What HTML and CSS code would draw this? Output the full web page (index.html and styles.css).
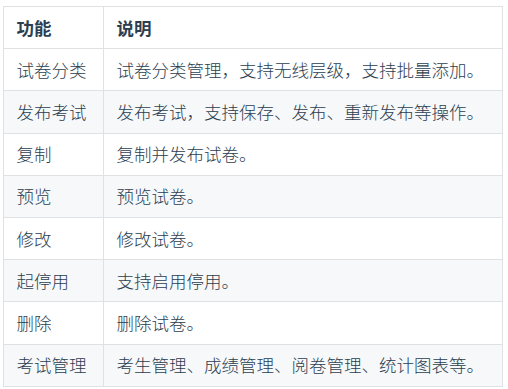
FILE: index.html
```html
<!DOCTYPE html>
<html lang="zh-CN">
<head>
<meta charset="utf-8">
<link rel="stylesheet" href="styles.css">
</head>
<body>
<table class="tbl">
  <thead>
    <tr><th class="c1">功能</th><th>说明</th></tr>
  </thead>
  <tbody>
    <tr><td>试卷分类</td><td>试卷分类管理，支持无线层级，支持批量添加。</td></tr>
    <tr><td>发布考试</td><td>发布考试，支持保存、发布、重新发布等操作。</td></tr>
    <tr><td>复制</td><td>复制并发布试卷。</td></tr>
    <tr><td>预览</td><td>预览试卷。</td></tr>
    <tr><td>修改</td><td>修改试卷。</td></tr>
    <tr><td>起停用</td><td>支持启用停用。</td></tr>
    <tr><td>删除</td><td>删除试卷。</td></tr>
    <tr><td>考试管理</td><td>考生管理、成绩管理、阅卷管理、统计图表等。</td></tr>
  </tbody>
</table>
</body>
</html>
```
FILE: styles.css
```css
html, body {
  margin: 0;
  padding: 0;
  background: #fff;
}
body {
  padding: 6px 0 0 3px;
  font-family: "Microsoft YaHei", "Noto Sans CJK SC", "Noto Sans", sans-serif;
  color: #2c3e50;
}
.tbl {
  border-collapse: collapse;
  width: 500px;
  font-size: 17.5px;
  line-height: 26.2px;
}
.tbl th, .tbl td {
  border: 1px solid #dfe2e5;
  padding: 7.5px 12.5px;
  text-align: left;
  vertical-align: middle;
}
.tbl td {
  font-weight: 300;
}
.tbl th {
  font-weight: 700;
}
.tbl .c1 {
  width: 74px;
}
.tbl tbody tr:nth-child(2n) {
  background: #f6f8fa;
}
```
